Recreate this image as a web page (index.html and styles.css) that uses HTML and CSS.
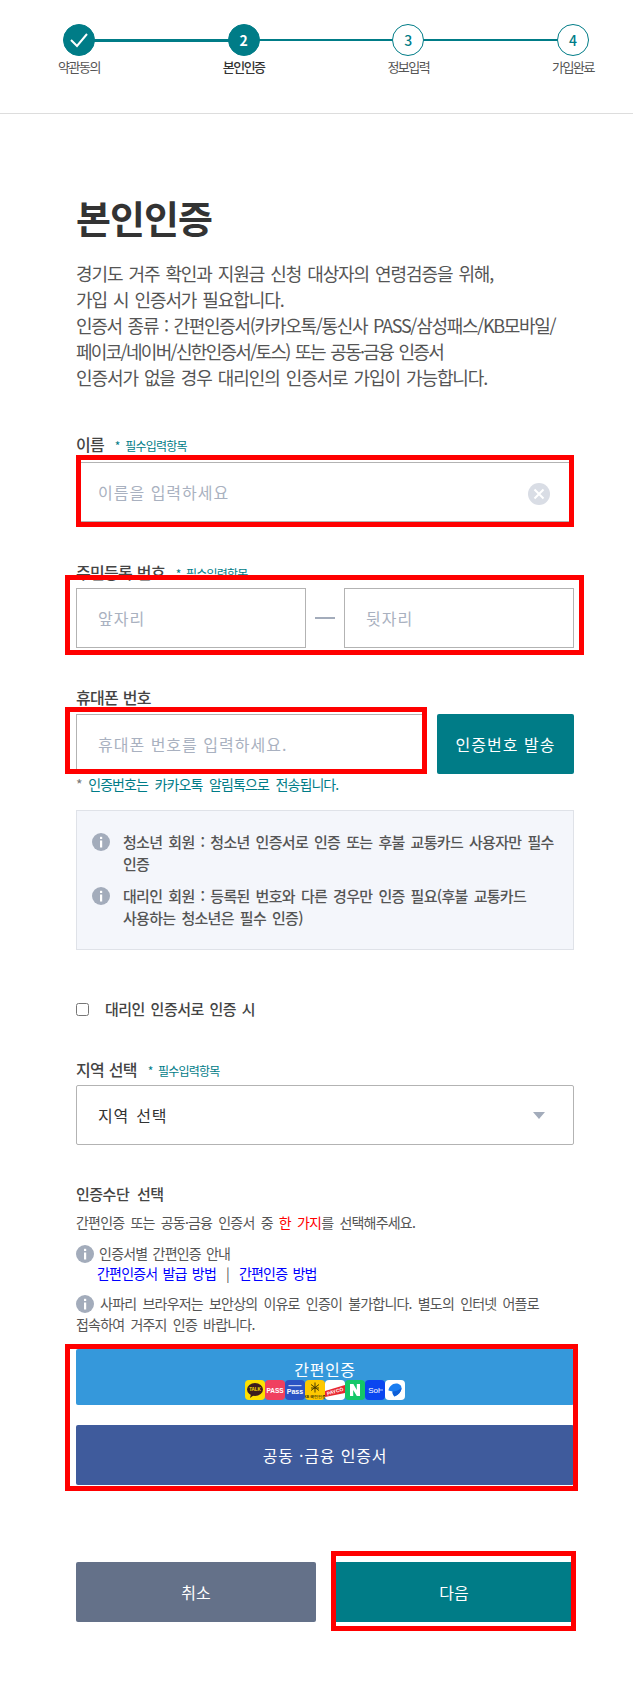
FILE: index.html
```html
<!DOCTYPE html>
<html lang="ko">
<head>
    <meta charset="UTF-8">
    <meta name="viewport" content="width=device-width, initial-scale=1.0">
    <title>본인인증</title>
    <link rel="stylesheet" href="styles.css">
</head>
<body>
<svg class="defs" width="0" height="0">
    <symbol id="info" viewBox="0 0 18 18">
        <circle cx="9" cy="9" r="9" fill="#a3acbb"/>
        <rect x="8" y="7.5" width="2.2" height="7" fill="#fff"/>
        <rect x="8" y="3.8" width="2.2" height="2.2" fill="#fff"/>
    </symbol>
</svg>

<header class="steps">
    <ol class="step-list">
        <li class="step done">
            <span class="step-num">
                <svg width="20" height="16" viewBox="0 0 20 16"><path d="M2 8l6 6L18 2" fill="none" stroke="#fff" stroke-width="2"/></svg>
            </span>
            <span class="step-name">약관동의</span>
        </li>
        <li class="step current">
            <span class="step-num">2</span>
            <span class="step-name">본인인증</span>
        </li>
        <li class="step">
            <span class="step-num">3</span>
            <span class="step-name">정보입력</span>
        </li>
        <li class="step">
            <span class="step-num">4</span>
            <span class="step-name">가입완료</span>
        </li>
    </ol>
</header>

<main class="content">
    <h1 class="title">본인인증</h1>
    <p class="intro">경기도 거주 확인과 지원금 신청 대상자의 연령검증을 위해,<br>
        가입 시 인증서가 필요합니다.<br>
        <span class="intro-kinds">인증서 종류 : 간편인증서(카카오톡/통신사 PASS/삼성패스/KB모바일/</span><br>
        <span class="intro-list">페이코/네이버/신한인증서/토스) 또는 공동·금융 인증서</span><br>
        인증서가 없을 경우 대리인의 인증서로 가입이 가능합니다.</p>

    <div class="group group-name">
        <label class="label">이름 <em class="req">* 필수입력항목</em></label>
        <div class="marked">
            <input class="input" type="text" placeholder="이름을 입력하세요">
            <span class="clear">
                <svg width="22" height="22" viewBox="0 0 22 22"><circle cx="11" cy="11" r="11" fill="#d9dde5"/><path d="M6.5 6.5l9 9M15.5 6.5l-9 9" stroke="#fff" stroke-width="2"/></svg>
            </span>
            <span class="mark mark-name"></span>
        </div>
    </div>

    <div class="group group-jumin">
        <label class="label">주민등록 번호 <em class="req">* 필수입력항목</em></label>
        <div class="marked jumin">
            <input class="input" type="text" placeholder="앞자리">
            <span class="dash"></span>
            <input class="input" type="text" placeholder="뒷자리">
            <span class="mark mark-jumin"></span>
        </div>
    </div>

    <div class="group">
        <label class="label label-phone">휴대폰 번호</label>
        <div class="marked phone">
            <input class="input" type="text" placeholder="휴대폰 번호를 입력하세요.">
            <button class="btn btn-teal" type="button">인증번호 발송</button>
            <span class="mark mark-phone"></span>
        </div>
        <p class="hint"><span class="hint-star">*</span> 인증번호는 카카오톡 알림톡으로 전송됩니다.</p>
    </div>

    <ul class="notice">
        <li class="notice-item">
            <svg class="notice-icon" width="18" height="18"><use href="#info"/></svg>
            <span>청소년 회원 : 청소년 인증서로 인증 또는 후불 교통카드 사용자만 필수 인증</span>
        </li>
        <li class="notice-item">
            <svg class="notice-icon" width="18" height="18"><use href="#info"/></svg>
            <span>대리인 회원 : 등록된 번호와 다른 경우만 인증 필요(후불 교통카드 사용하는 청소년은 필수 인증)</span>
        </li>
    </ul>

    <label class="agent"><input class="agent-check" type="checkbox"> 대리인 인증서로 인증 시</label>

    <div class="group">
        <label class="label">지역 선택 <em class="req">* 필수입력항목</em></label>
        <div class="select-wrap">
            <select class="select"><option>지역 선택</option></select>
        </div>
    </div>

    <section class="auth">
        <h2 class="auth-title">인증수단 선택</h2>
        <p class="auth-desc">간편인증 또는 공동·금융 인증서 중 <b class="red">한 가지</b>를 선택해주세요.</p>
        <p class="auth-guide">
            <svg class="inline-icon" width="18" height="18"><use href="#info"/></svg> 인증서별 간편인증 안내<br>
            <span class="auth-links"><a class="link">간편인증서 발급 방법</a><span class="link-sep">|</span><a class="link">간편인증 방법</a></span>
        </p>
        <p class="auth-safari"><svg class="inline-icon" width="18" height="18"><use href="#info"/></svg> 사파리 브라우저는 보안상의 이유로 인증이 불가합니다. 별도의 인터넷 어플로 접속하여 거주지 인증 바랍니다.</p>

        <div class="marked auth-btns">
            <button class="btn btn-simple" type="button">
                <span class="simple-text">간편인증</span>
                <span class="logos">
                    <svg class="logo" viewBox="0 0 20 20"><rect width="20" height="20" rx="4" fill="#fee100"/><ellipse cx="10" cy="9.5" rx="8" ry="6.5" fill="#3c1e1e"/><path d="M6 14l-1 4 4-3z" fill="#3c1e1e"/><text x="10" y="11.2" class="logo-text" font-size="4.5" fill="#fee100">TALK</text></svg>
                    <svg class="logo" viewBox="0 0 20 20"><rect width="20" height="20" rx="4" fill="#f0405f"/><text x="10" y="12.5" class="logo-text" font-size="6.5" fill="#fff">PASS</text></svg>
                    <svg class="logo" viewBox="0 0 20 20"><rect width="20" height="20" rx="4" fill="#2b54c4"/><rect x="3.5" y="5" width="13" height="1.2" fill="#c5d0f0"/><text x="10" y="14" class="logo-text" font-size="7" fill="#fff">Pass</text></svg>
                    <svg class="logo" viewBox="0 0 20 20"><rect width="20" height="20" rx="4" fill="#fdc800"/><path d="M10 2.5v10M6 4.5l8 6M14 4.5l-8 6M6 8h8" stroke="#3a3000" stroke-width=".9"/><text x="10" y="17.5" class="logo-text" font-size="3.6" fill="#3a3000">KB 국민인증</text></svg>
                    <svg class="logo" viewBox="0 0 20 20"><rect width="20" height="20" rx="4" fill="#fff"/><path d="M0 11l20-6v8L0 17z" fill="#e8262f"/><text x="10" y="13.2" class="logo-text" font-size="5" fill="#fff" transform="rotate(-16 10 11)">PAYCO</text></svg>
                    <svg class="logo" viewBox="0 0 20 20"><rect width="20" height="20" rx="4" fill="#14c768"/><path d="M5 16V4h3.4l3.4 6V4H15v12h-3.2L8.2 10v6z" fill="#fff"/></svg>
                    <svg class="logo" viewBox="0 0 20 20"><rect width="20" height="20" rx="4" fill="#0a46f0"/><text x="9" y="13" class="logo-sol" font-size="8" fill="#fff">Sol</text><path d="M14 10h4" stroke="#fff" stroke-width=".7"/></svg>
                    <svg class="logo" viewBox="0 0 20 20"><rect width="20" height="20" rx="4" fill="#fff"/><path d="M11 3.500c3 0 5.500 1.500 5.500 4.500 0 3.500-3 7-7 8.500-1.500-1.500-2-3-2-5L3.500 10.500c0-3.500 4-7 7.500-7z" fill="#1b7df0"/><path d="M7.500 11.500c3 0 6-1 9-3.500 0 3.500-3 7-7 8.500-1.500-1.500-2-3-2-5z" fill="#0f5fd8"/></svg>
                </span>
            </button>
            <button class="btn btn-cert" type="button">공동 ·금융 인증서</button>
            <span class="mark mark-auth"></span>
        </div>
    </section>

    <div class="actions">
        <button class="btn btn-cancel" type="button">취소</button>
        <div class="marked">
            <button class="btn btn-teal btn-next" type="button">다음</button>
            <span class="mark mark-next"></span>
        </div>
    </div>
</main>
</body>
</html>
```

FILE: styles.css
```css
* {
    box-sizing: border-box;
}

body {
    margin: 0;
    font-family: "Noto Sans CJK KR", "Noto Sans", sans-serif;
    color: #555;
    background: #fff;
}

.defs {
    position: absolute;
}

/* steps */
.steps {
    height: 114px;
    padding-top: 24px;
    border-bottom: 1px solid #ddd;
}

.step-list {
    display: flex;
    justify-content: space-between;
    margin: 0;
    padding: 0 38px 0 57px;
    list-style: none;
}

.step {
    position: relative;
    display: flex;
    flex-direction: column;
    align-items: center;
    width: 44px;
}

.step::after {
    content: "";
    position: absolute;
    top: 15px;
    left: 22px;
    width: 165px;
    height: 2px;
    background: #007c87;
}

.step:last-child::after {
    display: none;
}

.step.done::after {
    height: 3px;
}

.step-num {
    position: relative;
    z-index: 1;
    display: flex;
    align-items: center;
    justify-content: center;
    width: 32px;
    height: 32px;
    border: 1px solid #007c87;
    border-radius: 50%;
    background: #fff;
    color: #007c87;
    font-size: 14px;
    font-weight: 500;
}

.done .step-num,
.current .step-num {
    background: #007c87;
    color: #fff;
    font-weight: 700;
}

.step-name {
    margin-top: 1px;
    font-size: 13px;
    line-height: 20px;
    letter-spacing: -1.5px;
    white-space: nowrap;
    color: #555;
}

.current .step-name {
    color: #333;
    font-weight: 500;
}

/* content */
.content {
    padding: 78px 59px 61px 76px;
}

.title {
    margin: 0;
    font-size: 38px;
    line-height: 50px;
    font-weight: 700;
    letter-spacing: -1px;
    color: #333;
}

.intro {
    margin: 18px 0 0;
    font-size: 18px;
    line-height: 26px;
    letter-spacing: -1.1px;
    word-spacing: 2.1px;
    color: #555;
    white-space: nowrap;
}

.intro-kinds {
    letter-spacing: -1.3px;
}

.intro-list {
    letter-spacing: -1.7px;
}

.group {
    margin-top: 38px;
}

.group-name {
    margin-top: 43px;
}

.group-name .label {
    margin-bottom: 7px;
}

.group-jumin {
    margin-top: 39px;
}

.label {
    display: block;
    height: 22px;
    margin-bottom: 5px;
    font-size: 16px;
    line-height: 22px;
    font-weight: 500;
    letter-spacing: -0.7px;
    word-spacing: 1px;
    color: #444;
}

.label-phone {
    margin-bottom: 6px;
}

.req {
    margin-left: 6px;
    font-size: 12px;
    line-height: 1;
    font-style: normal;
    font-weight: 400;
    letter-spacing: -0.8px;
    word-spacing: 3px;
    color: #007c87;
}

.marked {
    position: relative;
}

.input {
    display: block;
    width: 100%;
    height: 60px;
    padding: 0 21px;
    border: 1px solid #b3b3b3;
    border-radius: 0;
    outline: none;
    font-family: inherit;
    font-size: 16px;
    letter-spacing: 1px;
    background: #fff;
}

.input::placeholder {
    color: #a9b1c0;
}

.clear {
    position: absolute;
    top: 21px;
    right: 24px;
    width: 22px;
    height: 22px;
}

/* red boxes lying over the fields */
.mark {
    position: absolute;
    border: 5px solid #f00;
    pointer-events: none;
}

.mark-name { top: -7px; right: 0; bottom: -5px; left: 0; }
.mark-jumin { top: -13px; right: -10px; bottom: -7px; left: -11px; }
.mark-phone { top: -7px; bottom: 0; left: -11px; width: 362px; }
.mark-auth { top: -5px; right: -4px; bottom: -6px; left: -11px; }
.mark-next { top: -11px; right: -2px; bottom: -9px; left: -3px; }

.jumin {
    display: grid;
    grid-template-columns: 230px 1fr 230px;
    align-items: center;
}

.dash {
    justify-self: center;
    width: 20px;
    height: 2px;
    background: #a3acbb;
}

.phone {
    display: flex;
    gap: 12px;
}

.phone .input {
    flex: 0 0 349px;
    width: 349px;
}

.btn {
    display: block;
    border: 0;
    border-radius: 2px;
    font-family: inherit;
    font-size: 16px;
    color: #fff;
    cursor: pointer;
}

.btn-teal {
    background: #007c87;
}

.phone .btn {
    flex: 1;
    height: 60px;
    letter-spacing: 1px;
}

.hint {
    margin: 0;
    font-size: 14px;
    line-height: 20px;
    letter-spacing: -0.9px;
    word-spacing: 3.5px;
    color: #007c87;
}

.hint-star {
    color: #777;
}

/* notice box */
.notice {
    margin: 16px 0 0;
    padding: 20px 16px 20px 15px;
    border: 1px solid #dfe2e8;
    background: #f4f6fb;
    list-style: none;
}

.notice-item {
    display: flex;
    gap: 13px;
    font-size: 15px;
    line-height: 22px;
    font-weight: 500;
    letter-spacing: -0.7px;
    word-spacing: 2.5px;
    word-break: keep-all;
    color: #555;
}

.notice-item + .notice-item {
    margin-top: 10px;
}

.notice-icon {
    flex: none;
    margin-top: 2px;
}

.agent {
    display: flex;
    align-items: center;
    margin-top: 48px;
    font-size: 15px;
    line-height: 22px;
    font-weight: 500;
    letter-spacing: -0.5px;
    word-spacing: 2px;
    color: #444;
}

.agent-check {
    width: 13px;
    height: 13px;
    margin: 0 16px 0 0;
}

.select-wrap {
    position: relative;
}

.select-wrap::after {
    content: "";
    position: absolute;
    top: 27px;
    right: 29px;
    border-top: 7px solid #a3acbb;
    border-right: 6px solid transparent;
    border-left: 6px solid transparent;
}

.select {
    display: block;
    width: 100%;
    height: 60px;
    padding: 0 21px;
    border: 1px solid #b3b3b3;
    border-radius: 2px;
    outline: none;
    appearance: none;
    background: #fff;
    font-family: inherit;
    font-size: 16px;
    letter-spacing: 0.8px;
    word-spacing: 2px;
    color: #333;
}

/* auth */
.auth {
    margin-top: 38px;
}

.auth-title {
    margin: 0;
    font-size: 15px;
    line-height: 22px;
    font-weight: 500;
    letter-spacing: -0.5px;
    word-spacing: 4px;
    color: #444;
}

.auth-desc {
    margin: 6px 0 0;
    font-size: 14px;
    line-height: 22px;
    letter-spacing: -0.8px;
    word-spacing: 3px;
}

.red {
    font-weight: 400;
    color: #f00;
}

.auth-guide {
    margin: 10px 0 0;
    font-size: 14px;
    line-height: 20px;
    letter-spacing: -0.8px;
    word-spacing: 2px;
}

.auth-links {
    margin-left: 21px;
}

.link {
    color: #00f;
}

.link-sep {
    margin: 0 10px;
    color: #555;
}

.auth-safari {
    margin: 10px 0 0;
    font-size: 14px;
    line-height: 21px;
    letter-spacing: -0.8px;
    word-spacing: 3px;
    word-break: keep-all;
}

.inline-icon {
    vertical-align: -4px;
}

.auth-btns {
    margin-top: 14px;
}

.btn-simple {
    width: 100%;
    height: 56px;
    padding: 4px 0 0;
    background: #3598db;
}

.simple-text {
    display: block;
    line-height: 22px;
    letter-spacing: 0.6px;
}

.logos {
    display: flex;
    justify-content: center;
}

.logo {
    display: block;
    width: 20px;
    height: 20px;
}

.logo-text {
    font-family: "Liberation Sans", sans-serif;
    font-weight: 700;
    text-anchor: middle;
}

.logo-sol {
    font-family: "Liberation Sans", sans-serif;
    text-anchor: middle;
}

.btn-cert {
    width: 100%;
    height: 60px;
    margin-top: 20px;
    background: #3f5b9c;
    letter-spacing: 0.8px;
}

.actions {
    display: grid;
    grid-template-columns: 1fr 1fr;
    gap: 18px;
    margin-top: 77px;
}

.btn-cancel {
    height: 60px;
    background: #647189;
}

.btn-next {
    width: 100%;
    height: 60px;
    border-radius: 0;
}
```
